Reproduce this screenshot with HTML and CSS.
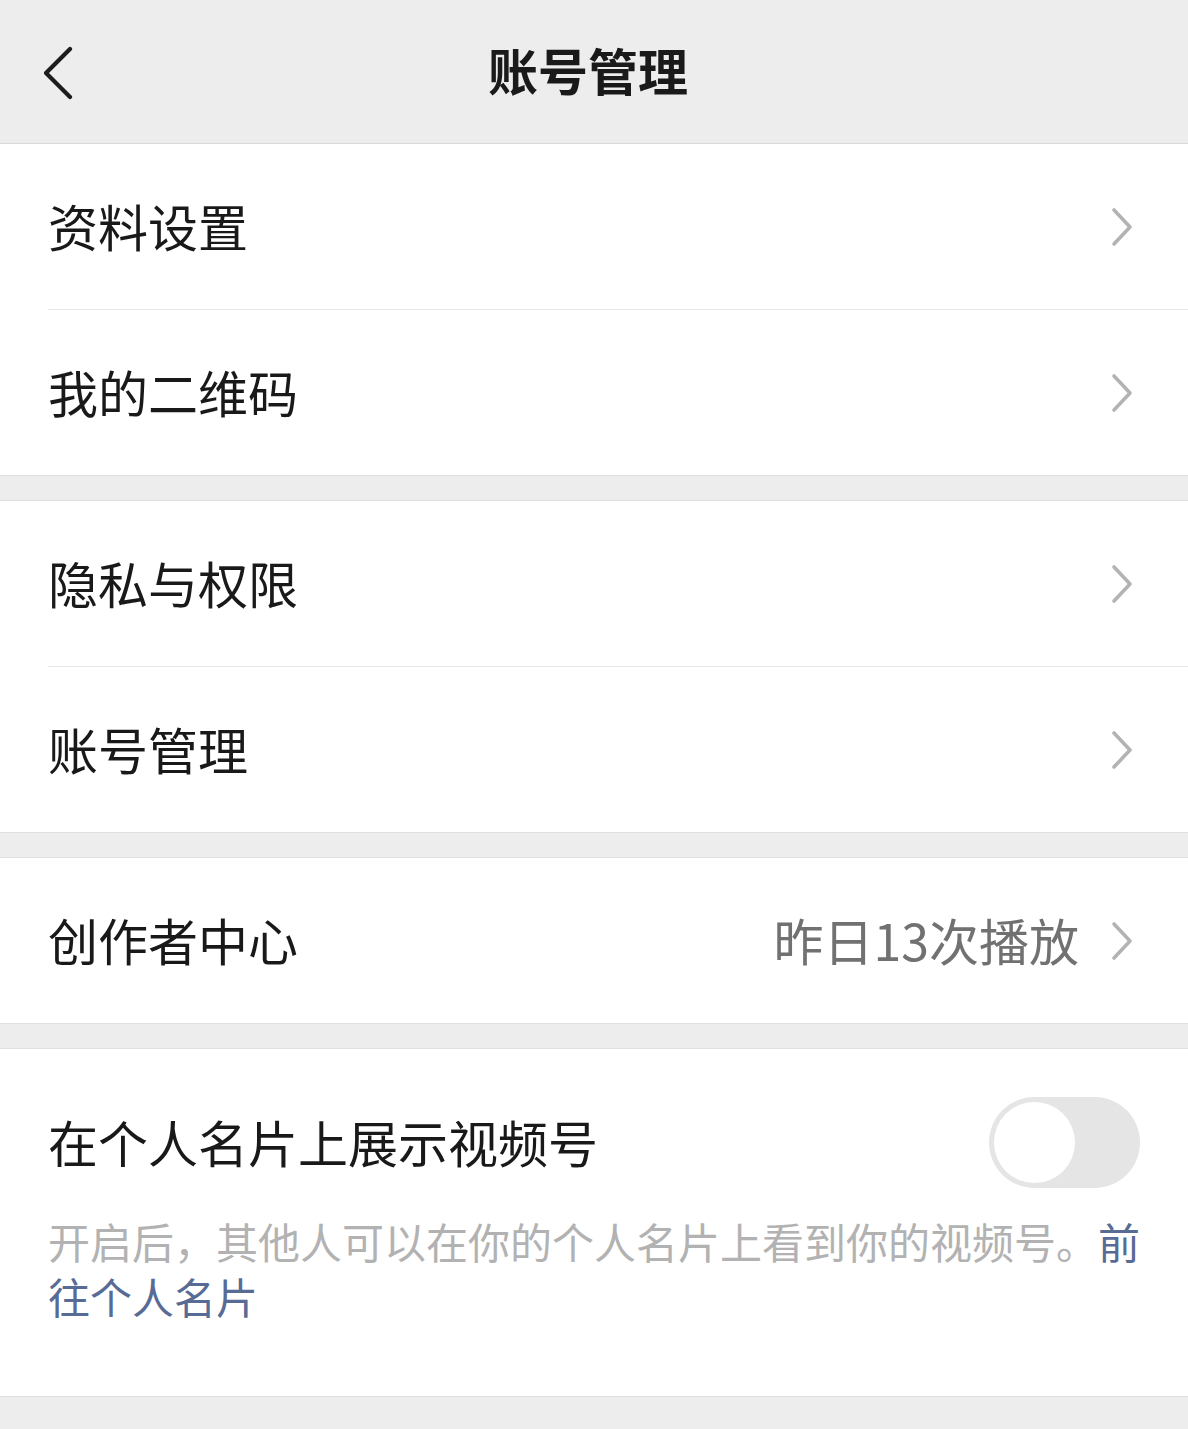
FILE: index.html
```html
<!DOCTYPE html>
<html lang="zh-CN">
<head>
<meta charset="utf-8">
<title>账号管理</title>
<link rel="stylesheet" href="styles.css">
</head>
<body>
<header class="topbar">
  <div class="topbar-left">
    <svg class="back" width="30" height="54" viewBox="0 0 30 54"><polyline points="26,3 2,27 26,51" fill="none" stroke="#1c1c1c" stroke-width="4.2" stroke-linecap="round" stroke-linejoin="round"/></svg>
  </div>
  <h1 class="topbar-title">账号管理</h1>
  <div class="topbar-right"></div>
</header>

<section class="group">
  <div class="row">
    <span class="label">资料设置</span>
    <span class="extra"><svg class="chev" width="22" height="40" viewBox="0 0 22 40"><polyline points="3,3 19,20 3,37" fill="none" stroke="#b3b3b3" stroke-width="3.6" stroke-linecap="round" stroke-linejoin="round"/></svg></span>
  </div>
  <div class="sep"></div>
  <div class="row">
    <span class="label">我的二维码</span>
    <span class="extra"><svg class="chev" width="22" height="40" viewBox="0 0 22 40"><polyline points="3,3 19,20 3,37" fill="none" stroke="#b3b3b3" stroke-width="3.6" stroke-linecap="round" stroke-linejoin="round"/></svg></span>
  </div>
</section>

<section class="group spaced">
  <div class="row">
    <span class="label">隐私与权限</span>
    <span class="extra"><svg class="chev" width="22" height="40" viewBox="0 0 22 40"><polyline points="3,3 19,20 3,37" fill="none" stroke="#b3b3b3" stroke-width="3.6" stroke-linecap="round" stroke-linejoin="round"/></svg></span>
  </div>
  <div class="sep"></div>
  <div class="row">
    <span class="label">账号管理</span>
    <span class="extra"><svg class="chev" width="22" height="40" viewBox="0 0 22 40"><polyline points="3,3 19,20 3,37" fill="none" stroke="#b3b3b3" stroke-width="3.6" stroke-linecap="round" stroke-linejoin="round"/></svg></span>
  </div>
</section>

<section class="group spaced">
  <div class="row">
    <span class="label">创作者中心</span>
    <span class="extra"><span class="value">昨日13次播放</span><svg class="chev" width="22" height="40" viewBox="0 0 22 40"><polyline points="3,3 19,20 3,37" fill="none" stroke="#b3b3b3" stroke-width="3.6" stroke-linecap="round" stroke-linejoin="round"/></svg></span>
  </div>
</section>

<section class="group spaced switch-group">
  <div class="switch-row">
    <span class="label label-switch">在个人名片上展示视频号</span>
    <span class="toggle"><span class="knob"></span></span>
  </div>
  <p class="desc">开启后，其他人可以在你的个人名片上看到你的视频号。<span class="link">前往个人名片</span></p>
</section>
</body>
</html>
```

FILE: styles.css
```css
* { box-sizing: border-box; }
html, body {
  margin: 0;
  padding: 0;
}
body {
  background: #ededed;
  font-family: "Noto Sans CJK SC", "Noto Sans", sans-serif;
  color: #191919;
  width: 1188px;
  min-height: 1429px;
}
.topbar {
  height: 144px;
  display: grid;
  grid-template-columns: 1fr auto 1fr;
  align-items: center;
  border-bottom: 1px solid #d9d9d9;
  background: #ededed;
  padding-right: 12px;
}
.topbar-left {
  padding-left: 44px;
  padding-top: 2px;
  display: flex;
  align-items: center;
}
.back { display: block; }
.topbar-title {
  margin: 0 0 6px 0;
  font-size: 50px;
  font-weight: 600;
  line-height: 1;
  color: #1a1a1a;
}
.group {
  background: #fff;
  border-bottom: 1px solid #e0e0e0;
}
.group.spaced {
  margin-top: 24px;
  border-top: 1px solid #e0e0e0;
}
.row {
  height: 165px;
  display: flex;
  align-items: center;
  justify-content: space-between;
  padding: 0 55px 0 48px;
}
.label {
  font-size: 50px;
  line-height: 1;
  color: #191919;
  margin-bottom: 4px;
}
.label-switch { margin-bottom: 3px; }
.extra {
  display: flex;
  align-items: center;
  gap: 32px;
}
.value {
  font-size: 50px;
  line-height: 1;
  color: #717171;
  margin-bottom: 4px;
}
.chev { display: block; }
.sep {
  height: 1px;
  margin-left: 48px;
  background: #e6e6e6;
}
.switch-group {
  padding: 48px 46px 73px 48px;
}
.switch-row {
  height: 91px;
  display: flex;
  align-items: center;
  justify-content: space-between;
  padding-right: 2px;
}
.toggle {
  width: 151px;
  height: 91px;
  border-radius: 46px;
  background: #e5e5e5;
  display: flex;
  align-items: center;
  padding-left: 5px;
}
.knob {
  width: 81px;
  height: 81px;
  border-radius: 50%;
  background: #fff;
}
.desc {
  margin: 25px 0 0 0;
  font-size: 42px;
  line-height: 55px;
  color: #b2b2b2;
}
.link {
  color: #576b95;
}
```
